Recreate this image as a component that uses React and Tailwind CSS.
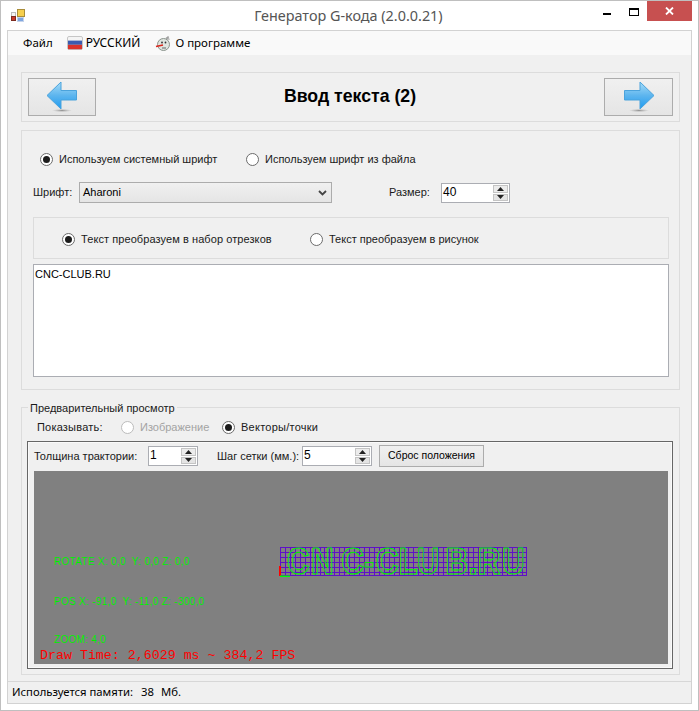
import React from "react";

// small windows-forms style pieces
function Radio({ checked, disabled }) {
  return (
    <span className={`flex h-[13px] w-[13px] shrink-0 items-center justify-center rounded-full border bg-white ${disabled ? "border-[#bcbcbc] bg-[#f0f0f0]" : "border-[#6b6b6b]"}`}>
      {checked && <span className="h-[7px] w-[7px] rounded-full bg-[#1c1c1c]" />}
    </span>
  );
}

function RadioLabel({ checked, disabled, children, className = "" }) {
  return (
    <div className={`flex items-center gap-[6px] ${className}`}>
      <Radio checked={checked} disabled={disabled} />
      <span className={disabled ? "text-[#a3a3a3]" : "text-[#1a1a1a]"}>{children}</span>
    </div>
  );
}

function Spin({ value, className }) {
  return (
    <div className={`flex items-stretch border border-[#abadb3] bg-white ${className}`}>
      <span className="flex-1 pl-[1px] text-[12px] leading-[17px] text-black">{value}</span>
      <div className="my-[1px] mr-[1px] flex w-[15px] flex-col gap-[1px]">
        <div className="flex flex-1 items-center justify-center border border-[#c4c4c4] bg-[#ececec]">
          <svg width="7" height="4" viewBox="0 0 7 4"><path d="M3.5 0L7 4H0z" fill="#222" /></svg>
        </div>
        <div className="flex flex-1 items-center justify-center border border-[#c4c4c4] bg-[#e4e4e4]">
          <svg width="7" height="4" viewBox="0 0 7 4"><path d="M0 0h7L3.5 4z" fill="#222" /></svg>
        </div>
      </div>
    </div>
  );
}

function Arrow({ flip }) {
  const id = flip ? "arrR" : "arrL";
  return (
    <svg width="32" height="32" viewBox="0 0 32 32" className={flip ? "-scale-x-100" : ""}>
      <defs>
        <linearGradient id={id} x1="0" y1="0" x2="0" y2="1">
          <stop offset="0" stopColor="#a6dcf8" />
          <stop offset="0.5" stopColor="#5db5ee" />
          <stop offset="1" stopColor="#1f9bf0" />
        </linearGradient>
        <radialGradient id={id + "s"}>
          <stop offset="0" stopColor="#777" stopOpacity="0.75" />
          <stop offset="1" stopColor="#999" stopOpacity="0" />
        </radialGradient>
      </defs>
      <ellipse cx="16" cy="29.5" rx="10" ry="1.6" fill={`url(#${id}s)`} />
      <path d="M1 14.5L15 1v8.5h15.5V19H15v9z" fill={`url(#${id})`} stroke="#4ba3dc" strokeWidth="1" strokeLinejoin="round" />
    </svg>
  );
}

function AppIcon() {
  return (
    <svg width="15" height="14" viewBox="0 0 15 14">
      <rect x="0.5" y="3.5" width="4" height="4" fill="#f4f4f4" stroke="#bbb" />
      <rect x="6.5" y="0.5" width="7" height="7" fill="#f6cf4e" stroke="#a98d3a" />
      <rect x="0.5" y="7.5" width="4" height="4" fill="#c8392b" stroke="#7c2a20" />
      <rect x="6.5" y="8.5" width="6" height="4" fill="#7ea6e0" stroke="#c5d3ea" />
    </svg>
  );
}

function Flag() {
  return (
    <svg width="16" height="14" viewBox="0 0 16 14">
      <rect x="0.5" y="0.5" width="15" height="13" rx="1.5" fill="#f4f4f4" stroke="#c6c6c6" />
      <rect x="1" y="4.6" width="14" height="4.2" fill="#3a5cb0" />
      <rect x="1" y="8.8" width="14" height="4.4" fill="#d9332b" />
    </svg>
  );
}

function AboutIcon() {
  return (
    <svg width="17" height="17" viewBox="0 0 17 17">
      <path d="M13.5 1.5L11 5" stroke="#999" strokeWidth="1.6" fill="none" />
      <path d="M11 2.5l3.5 2" stroke="#aaa" strokeWidth="1.4" fill="none" />
      <circle cx="8.5" cy="9.5" r="6" fill="#dfe5df" stroke="#8b948d" />
      <circle cx="7" cy="7.5" r="0.9" fill="#333" />
      <circle cx="10.5" cy="7.5" r="0.9" fill="#333" />
      <path d="M1 11.5l7-1.5" stroke="#d8261c" strokeWidth="1.5" />
      <path d="M7 13h4" stroke="#666" strokeWidth="1" />
    </svg>
  );
}

function GridPreview() {
  const w = 247;
  const h = 29;
  const xs = [];
  const ys = [];
  for (let i = 0; i * 4.94 < w; i++) xs.push(Math.round(i * 4.94) + 0.5);
  xs.push(w - 0.5);
  for (let y = 0; y < h; y += 5) ys.push(y + 0.5);
  ys.push(h - 0.5);
  // glyph starts follow the letter spacing of the preview (before the x scale)
  const glyphX = "7.8 36.6 72.1 98.5 112.8 139.4 160.9 194.7 222 232.7 261.3";
  return (
    <svg width="270" height="60" viewBox="-2 -14 270 60" className="absolute left-[244px] top-[62px]">
      {xs.map((x) => <line key={x} x1={x} x2={x} y1="0" y2={h} stroke="#5f10c8" strokeWidth="1" shapeRendering="crispEdges" />)}
      {ys.map((y) => <line key={y} x1="0" x2={w} y1={y} y2={y} stroke="#5f10c8" strokeWidth="1" shapeRendering="crispEdges" />)}
      <text
        x={glyphX}
        y="27"
        transform="scale(0.85 1)"
        fontFamily="'Liberation Sans', sans-serif"
        fontWeight="700"
        fontSize="37"
        fill="none"
        stroke="#00ee00"
        strokeWidth="1"
      >
        CNC-CLUB.RU
      </text>
      <rect x="-1" y="19" width="2" height="10" fill="#ff0000" />
      <rect x="0" y="28.5" width="10" height="1.5" fill="#00ff00" />
    </svg>
  );
}

export default function App() {
  return (
    <div className="flex h-[711px] w-[699px] flex-col overflow-hidden border border-[#bfbfbf] bg-white font-['Liberation_Sans',sans-serif] text-[11px] text-[#1a1a1a]">
      {/* title bar */}
      <div className="relative flex h-[29px] shrink-0 items-center">
        <div className="ml-[10px] mt-[1px]"><AppIcon /></div>
        <div className="flex-1 pr-[27px] text-center font-['Noto_Sans',sans-serif] text-[14.4px] text-[#555]">Генератор G-кода (2.0.0.21)</div>
        <div className="absolute right-[6px] top-0 flex items-start">
          <span className="mr-[18px] mt-[12px] h-[2px] w-[8px] bg-black" />
          <span className="mr-[8px] mt-[7px] h-[8px] w-[10px] border border-t-2 border-black" />
          <div className="flex h-[20px] w-[45px] items-center justify-center bg-[#c75050]">
            <svg width="9" height="8" viewBox="0 0 9 8"><path d="M1 0.5l7 7M8 0.5l-7 7" stroke="#fff" strokeWidth="1.8" /></svg>
          </div>
        </div>
      </div>

      {/* client area */}
      <div className="mx-[6px] flex h-[674px] flex-col border border-[#d2d2d2] bg-[#f0f0f0]">
        <div className="flex h-[24px] shrink-0 items-center bg-[#f9f9f9] pl-[15px] font-['Noto_Sans',sans-serif] text-[11.5px] text-black">
          <span>Файл</span>
          <span className="ml-[14px]"><Flag /></span>
          <span className="ml-[3px] text-[12px]">РУССКИЙ</span>
          <span className="ml-[15px]"><AboutIcon /></span>
          <span className="ml-[3px]">О программе</span>
        </div>

        <div className="ml-[13px] w-[659px]">
          {/* wizard header */}
          <div className="mt-[17px] flex h-[50px] items-center justify-between border border-[#dcdcdc] px-[6px]">
            <button className="flex h-[38px] w-[68px] items-center justify-center border border-[#acacac] bg-gradient-to-b from-[#f0f0f0] to-[#e5e5e5]"><Arrow /></button>
            <div className="mt-[-2px] text-[17.7px] font-bold text-black">Ввод текста (2)</div>
            <button className="flex h-[38px] w-[69px] items-center justify-center border border-[#acacac] bg-gradient-to-b from-[#f0f0f0] to-[#e5e5e5]"><Arrow flip /></button>
          </div>

          {/* text input */}
          <div className="mt-[8px] flex h-[260px] flex-col border border-[#dcdcdc] pl-[11px]">
            <div className="ml-[7px] mt-[21px] flex h-[14px] items-center">
              <RadioLabel checked className="w-[206px]">Используем системный шрифт</RadioLabel>
              <RadioLabel>Используем шрифт из файла</RadioLabel>
            </div>
            <div className="mt-[16px] flex h-[21px] items-center">
              <span className="w-[46px]">Шрифт:</span>
              <div className="flex h-[21px] w-[253px] items-center justify-between border border-[#acacac] bg-gradient-to-b from-[#f0f0f0] to-[#e5e5e5] pl-[3px] pr-[4px] text-black">
                <span>Aharoni</span>
                <svg width="9" height="6" viewBox="0 0 9 6"><path d="M1 1l3.5 3.5L8 1" fill="none" stroke="#444" strokeWidth="1.8" /></svg>
              </div>
              <span className="ml-[57px] w-[52px]">Размер:</span>
              <Spin value="40" className="mt-[1px] h-[20px] w-[69px]" />
            </div>
            <div className="mt-[14px] flex h-[42px] w-[636px] items-center border border-[#dcdcdc] pl-[28px] pt-[2px]">
              <RadioLabel checked className="w-[248px] tracking-[0.08px]">Текст преобразуем в набор отрезков</RadioLabel>
              <RadioLabel>Текст преобразуем в рисунок</RadioLabel>
            </div>
            <div className="mt-[5px] h-[113px] w-[636px] border border-[#abadb3] bg-white pl-[1px] pt-[2px] text-[11px] leading-[14px] text-black">CNC-CLUB.RU</div>
          </div>

          {/* preview */}
          <div className="relative mt-[17px] flex h-[268px] flex-col border border-[#dcdcdc] pl-[5px]">
            <span className="absolute left-[6px] top-[-6px] bg-[#f0f0f0] px-[2px] leading-[13px]">Предварительный просмотр</span>
            <div className="ml-[10px] mt-[12px] flex h-[14px] items-center">
              <span className="w-[84px] tracking-[0.2px]">Показывать:</span>
              <RadioLabel disabled checked={false} className="w-[101px]">Изображение</RadioLabel>
              <RadioLabel checked className="tracking-[0.25px]">Векторы/точки</RadioLabel>
            </div>
            <div className="mt-[7px] flex h-[228px] w-[646px] flex-col border border-[#666] pl-[6px] shadow-[inset_0_0_0_1px_#fafafa]">
              <div className="flex h-[29px] shrink-0 items-center">
                <span className="w-[114px]">Толщина трактории:</span>
                <Spin value="1" className="mt-[-1px] h-[20px] w-[50px]" />
                <span className="ml-[19px] w-[85px]">Шаг сетки (мм.):</span>
                <Spin value="5" className="mt-[-1px] h-[20px] w-[70px]" />
                <button className="ml-[7px] mt-[-1px] h-[22px] w-[105px] border border-[#acacac] bg-gradient-to-b from-[#f0f0f0] to-[#e5e5e5] text-[10.5px] text-black">Сброс положения</button>
              </div>
              <div className="relative h-[193px] w-[634px] overflow-hidden bg-[#808080]">
                <span className="absolute left-[20px] top-[84px] whitespace-pre text-[10px] leading-[14px] tracking-[0.3px] text-[#00f000]">ROTATE X: 0,0  Y: 0,0 Z: 0,0</span>
                <span className="absolute left-[20px] top-[124px] whitespace-pre text-[10px] leading-[14px] tracking-[0.3px] text-[#00f000]">POS X: -91,0  Y: -11,0 Z: -300,0</span>
                <span className="absolute left-[20px] top-[162px] whitespace-pre text-[10px] leading-[14px] tracking-[0.3px] text-[#00f000]">ZOOM: 4,0</span>
                <span className="absolute left-[6px] top-[177px] whitespace-pre font-['Liberation_Mono',monospace] text-[13.3px] leading-[15px] text-[#ff0000]">Draw Time: 2,6029 ms ~ 384,2 FPS</span>
                <GridPreview />
              </div>
            </div>
          </div>
        </div>

        {/* status bar */}
        <div className="mt-[6px] flex h-[22px] items-center border-t border-[#d7d7d7] pl-[4px] font-['Noto_Sans',sans-serif] text-[11.3px] text-black">
          <span>Используется памяти:</span>
          <span className="ml-[8px]">38</span>
          <span className="ml-[7px]">Мб.</span>
        </div>
      </div>
    </div>
  );
}
